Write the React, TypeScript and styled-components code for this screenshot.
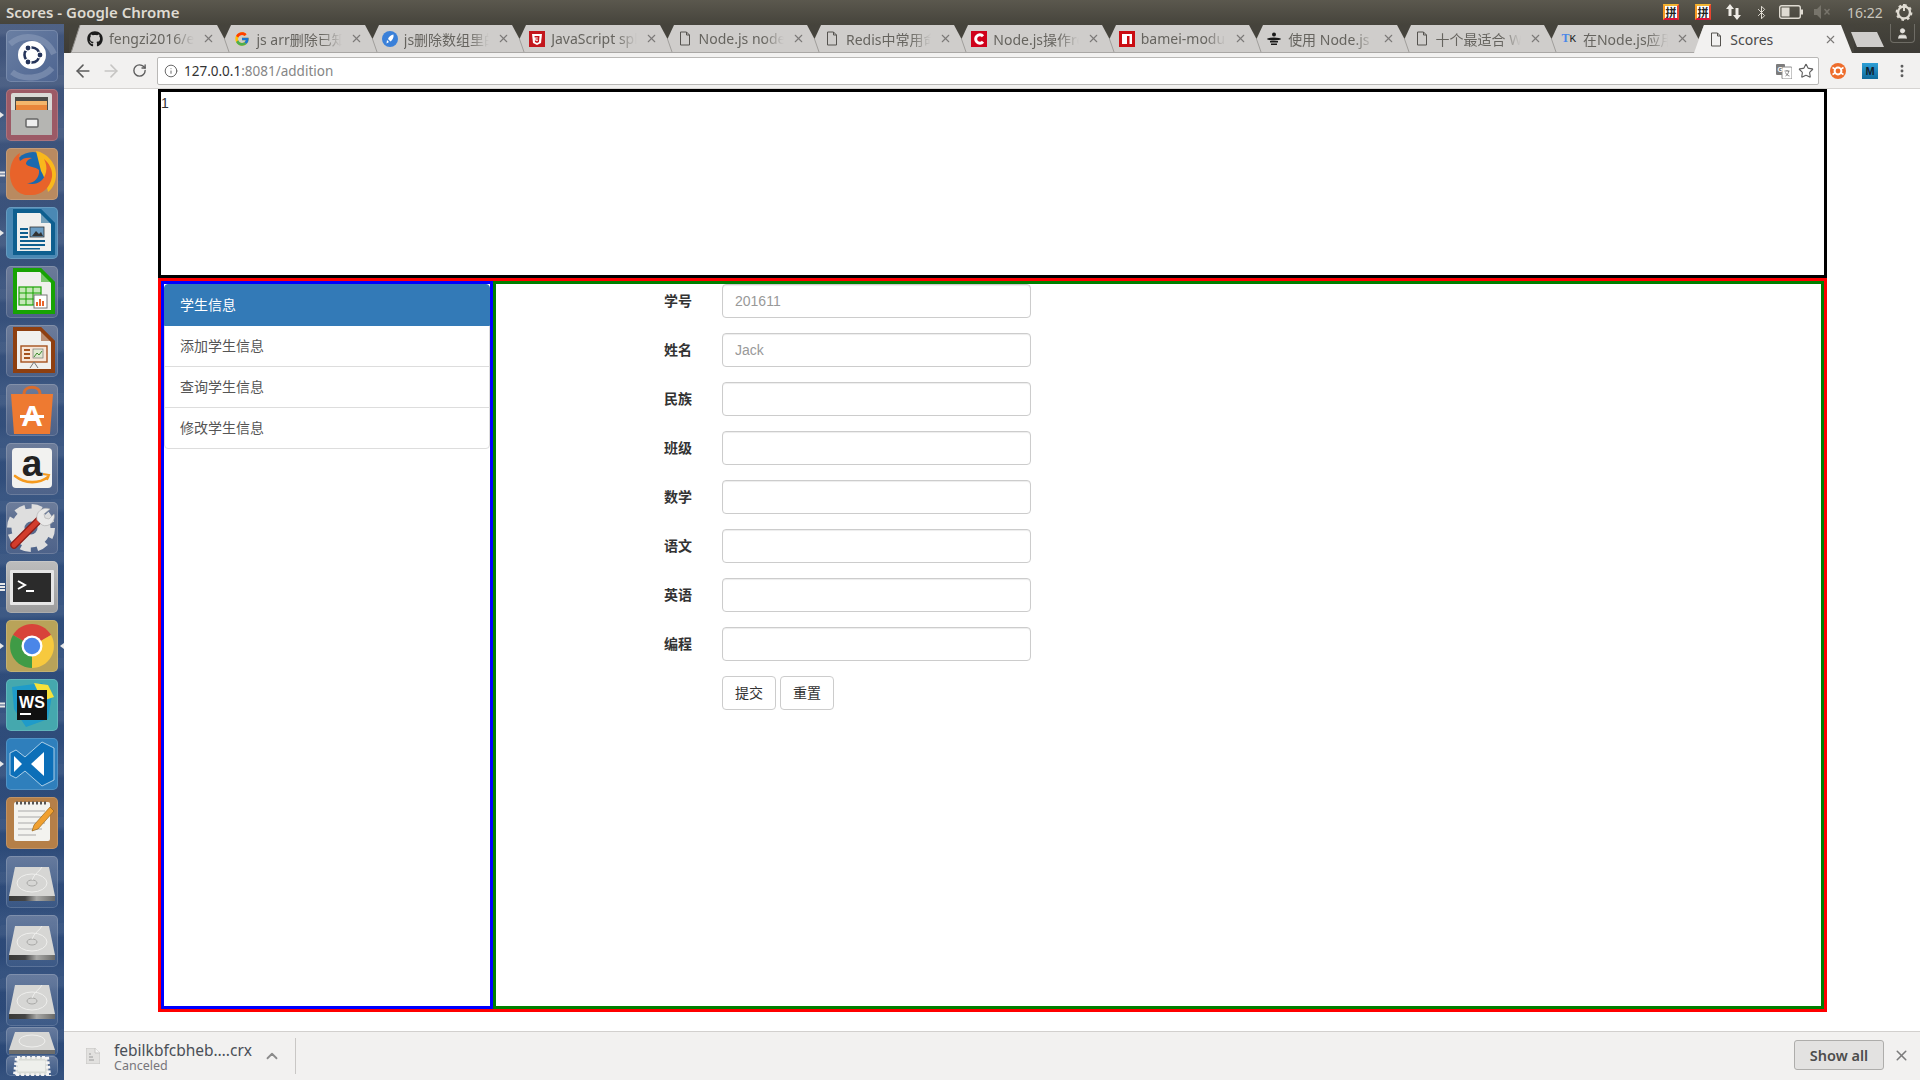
import { Fragment } from "react";
import type { ReactNode } from "react";
import styled, { createGlobalStyle } from "styled-components";
import { ArrowLeft, ArrowRight, Bluetooth, ChevronUp, EllipsisVertical, Info, RotateCw, Star, User, X } from "lucide-react";
import { FaGithub } from "react-icons/fa";
import { FcGoogle } from "react-icons/fc";

const UI_FONT = `"Noto Sans", "Noto Sans CJK SC", sans-serif`;
const PAGE_FONT = `"Liberation Sans", "Noto Sans CJK SC", sans-serif`;

const GlobalStyle = createGlobalStyle`
  html, body {
    margin: 0;
    padding: 0;
    height: 100%;
    overflow: hidden;
    background: #fff;
    font-family: ${PAGE_FONT};
  }
  * {
    box-sizing: border-box;
  }
`;

const Desktop = styled.div`
  width: 1920px;
  height: 1080px;
  display: flex;
  flex-direction: column;
  overflow: hidden;
`;

/* ---- ubuntu top panel ---- */

const TopPanel = styled.header`
  height: 24px;
  flex: none;
  display: flex;
  align-items: center;
  justify-content: space-between;
  padding: 0 5px 0 6px;
  background: linear-gradient(#5b584e, #46443c);
`;

const WindowTitle = styled.span`
  font: 600 15px ${UI_FONT};
  color: #dfdbd2;
`;

const Tray = styled.div`
  display: flex;
  align-items: center;
  height: 100%;
`;

const TraySlot = styled.div<{ $w: number }>`
  width: ${({ $w }) => $w}px;
  height: 100%;
  display: flex;
  align-items: center;
  justify-content: center;
  color: #dfdbd2;
`;

const PinyinBadge = styled.span`
  width: 16px;
  height: 16px;
  display: flex;
  align-items: center;
  justify-content: center;
  font: 700 11px "Noto Sans CJK SC", sans-serif;
  color: #222;
  background: #fff;
  border: 2px solid;
  border-color: #f2b632 #e9452e #d9143c #f59a23;
`;

const Clock = styled.span`
  font: 400 14px ${UI_FONT};
  color: #c9c5bb;
`;

const ArrowsIcon = () => (
  <svg width="18" height="18" viewBox="0 0 18 18" fill="#efece6">
    <path d="M5 1l4 5H6.5v7h-3V6H1z" />
    <path d="M12 17l-4-5h2.5V5h3v7H16z" />
  </svg>
);

const BatteryIcon = () => (
  <svg width="24" height="14" viewBox="0 0 24 14">
    <rect x="0.7" y="0.7" width="20.6" height="12.6" rx="2" fill="none" stroke="#dfdbd2" strokeWidth="1.4" />
    <rect x="2.5" y="2.5" width="8" height="9" fill="#dfdbd2" />
    <rect x="22" y="4.5" width="2" height="5" fill="#dfdbd2" />
  </svg>
);

const VolumeIcon = () => (
  <svg width="18" height="14" viewBox="0 0 18 14" fill="#77746b">
    <path d="M0 4h3l4-4v14l-4-4H0z" />
    <path d="M10 4.5l1-1 2 2 2-2 1 1-2 2.5 2 2-1 1-2-2-2 2-1-1 2-2z" />
  </svg>
);

const SessionIcon = () => (
  <svg width="18" height="18" viewBox="0 0 18 18" fill="none" stroke="#dfdbd2">
    <circle cx="9" cy="9.5" r="6" strokeWidth="2.4" />
    <circle cx="9" cy="9.5" r="7.4" strokeWidth="2" strokeDasharray="2.6 3.2" />
    <path d="M9 1v7" strokeWidth="2" />
  </svg>
);

/* ---- launcher ---- */

const Workspace = styled.div`
  flex: 1;
  min-height: 0;
  display: flex;
`;

const Launcher = styled.nav`
  width: 64px;
  flex: none;
  display: flex;
  flex-direction: column;
  gap: 7px;
  padding: 6px 0 0 6px;
  overflow: hidden;
  background:
    repeating-linear-gradient(178deg, rgba(170, 178, 190, 0.1) 0 9px, rgba(20, 40, 80, 0.08) 14px 31px, rgba(170, 178, 190, 0.06) 46px 53px),
    linear-gradient(#45597f, #33517f 45%, #2e4c7b);
`;

const Tile = styled.div<{ $bg: string; $h?: number; $pull?: number }>`
  position: relative;
  width: 52px;
  height: ${({ $h }) => $h ?? 52}px;
  margin-top: ${({ $pull }) => $pull ?? 0}px;
  flex: none;
  border-radius: 5px;
  background: ${({ $bg }) => $bg};
  box-shadow: inset 0 0 0 1px rgba(255, 255, 255, 0.16);

  svg {
    display: block;
    width: 100%;
    height: 100%;
  }
`;

const Pip = styled.span<{ $side: "left" | "right" }>`
  position: absolute;
  top: 50%;
  ${({ $side }) => ($side === "left" ? "left: -6px" : "right: -6px")};
  margin-top: -3px;
  width: 0;
  height: 0;
  border-top: 3px solid transparent;
  border-bottom: 3px solid transparent;
  ${({ $side }) => ($side === "left" ? "border-left: 4px solid #e8e8e8" : "border-right: 4px solid #e8e8e8")};
`;

const PipDashes = styled.span`
  position: absolute;
  top: 50%;
  left: -6px;
  transform: translateY(-50%);
  display: flex;
  flex-direction: column;
  gap: 1px;

  i {
    display: block;
    width: 5px;
    height: 2px;
    background: #e8e8e8;
  }
`;

const Dashes = ({ count }: { count: number }) => (
  <PipDashes>
    {Array.from({ length: count }, (_, i) => (
      <i key={i} />
    ))}
  </PipDashes>
);

const UbuntuGlyph = () => (
  <svg viewBox="0 0 52 52">
    <path d="M4 14C18 2 40 6 48 24M6 42c10 8 30 8 40-4" fill="none" stroke="#8a9bb9" strokeWidth="6" opacity="0.6" />
    <circle cx="26" cy="25" r="14" fill="#fff" />
    <circle cx="26" cy="25" r="7.5" fill="none" stroke="#25345a" strokeWidth="2.6" />
    <g fill="#25345a" stroke="#fff" strokeWidth="1.2">
      <circle cx="34" cy="25" r="3" />
      <circle cx="22" cy="18" r="3" />
      <circle cx="22" cy="32" r="3" />
    </g>
  </svg>
);

const FilesGlyph = () => (
  <svg viewBox="0 0 52 52">
    <rect x="5" y="4" width="41" height="42" rx="2" fill="#d9d9d6" />
    <rect x="9" y="8" width="33" height="15" fill="#4a4a48" />
    <rect x="10" y="12" width="31" height="5" fill="#f3b56b" />
    <rect x="10" y="16" width="31" height="6" fill="#e8853a" />
    <rect x="5" y="21" width="41" height="25" fill="#b5b5b2" />
    <rect x="20" y="30" width="12" height="8" rx="1" fill="#eee" stroke="#666" strokeWidth="1.5" />
  </svg>
);

const FirefoxGlyph = () => (
  <svg viewBox="0 0 52 52">
    <circle cx="27" cy="24" r="20" fill="#1b69ae" />
    <path d="M30 3c11 2 20 12 20 23 0 8-3 14-8 18-2-9-3-14-7-21z" fill="#f9b81c" />
    <path d="M4 26C4 16 8 8 14 5c-1 3-1 6 0 8 3-3 7-4 12-3-3 1-6 3-6 6 3 4 9 2 13 6 1 7-5 14-12 13 8 3 17-1 19-11 1-5 0-9-2-13 5 4 9 11 8 18-2 12-12 19-22 18C12 48 4 38 4 26z" fill="#e8632a" />
  </svg>
);

const OfficeGlyph = ({ accent, children }: { accent: string; children: ReactNode }) => (
  <svg viewBox="0 0 52 52">
    <path d="M7 2h28l14 14v32H7z" fill={accent} />
    <path d="M11 6h23l11 11v27H11z" fill="#f0f0ee" />
    <path d="M35 2l14 14H35z" fill={accent} opacity="0.55" />
    {children}
  </svg>
);

const WriterGlyph = () => (
  <OfficeGlyph accent="#0f5f8f">
    <g fill="#0f5f8f">
      <rect x="14" y="21" width="8" height="2" />
      <rect x="14" y="25" width="8" height="2" />
      <rect x="14" y="29" width="8" height="2" />
      <rect x="14" y="33" width="25" height="2" />
      <rect x="14" y="37" width="25" height="2" />
      <rect x="14" y="41" width="20" height="1.5" />
    </g>
    <rect x="24" y="20" width="14" height="10" fill="#6d9ec4" stroke="#333" strokeWidth="0.8" />
    <path d="M26 29l4-5 3 3 2-2 2 4z" fill="#333" />
  </OfficeGlyph>
);

const CalcGlyph = () => (
  <OfficeGlyph accent="#18a303">
    <rect x="13" y="21" width="22" height="18" fill="#c5e8b8" stroke="#18a303" strokeWidth="1.2" />
    <path d="M13 27h22M13 33h22M20 21v18M27 21v18" stroke="#18a303" strokeWidth="1" />
    <rect x="28" y="29" width="13" height="13" fill="#fff" stroke="#777" />
    <path d="M31 40v-4M34 40v-7M37 40v-5" strokeWidth="2" stroke="#e8632a" />
  </OfficeGlyph>
);

const ImpressGlyph = () => (
  <OfficeGlyph accent="#8e3f10">
    <rect x="15" y="21" width="26" height="16" fill="#f7e6d8" stroke="#a5521e" strokeWidth="1.4" />
    <path d="M18 25h6M18 29h6M18 33h6" stroke="#a5521e" strokeWidth="2" />
    <rect x="27" y="24" width="10" height="9" fill="#dfe8d0" stroke="#777" strokeWidth="0.7" />
    <path d="M28 32l3-4 2 2 3-4" stroke="#3c8a2e" strokeWidth="1" fill="none" />
    <path d="M28 37l-4 6M28 37l4 6" stroke="#777" strokeWidth="1" fill="none" />
  </OfficeGlyph>
);

const StoreGlyph = () => (
  <svg viewBox="0 0 52 52">
    <path d="M18 10c0-9 16-9 16 0" fill="none" stroke="#d96c2d" strokeWidth="3" />
    <path d="M5 10h42l-3 40H8z" fill="#ee7a31" />
    <text x="26" y="42" fontFamily="Liberation Sans" fontWeight="700" fontSize="30" fill="#fff" textAnchor="middle">
      A
    </text>
    <rect x="14" y="31" width="24" height="3" fill="#fff" />
  </svg>
);

const AmazonGlyph = () => (
  <svg viewBox="0 0 52 52">
    <rect x="6" y="5" width="40" height="40" rx="4" fill="#f2f2f0" />
    <text x="26" y="33" fontFamily="Liberation Sans" fontWeight="700" fontSize="37" fill="#222" textAnchor="middle">
      a
    </text>
    <path d="M9 33c10 8 24 8 33 1" fill="none" stroke="#f49a1f" strokeWidth="2.6" strokeLinecap="round" />
    <path d="M37 31l6 1-2 5" fill="none" stroke="#f49a1f" strokeWidth="2" />
  </svg>
);

const SettingsGlyph = () => (
  <svg viewBox="0 0 52 52">
    <circle cx="25" cy="26" r="13" fill="none" stroke="#dedede" strokeWidth="13" />
    <circle cx="25" cy="26" r="21" fill="none" stroke="#dedede" strokeWidth="6" strokeDasharray="10 6.490" />
    <path d="M8 43l26-26" stroke="#8f1d17" strokeWidth="7.500" strokeLinecap="round" />
    <path d="M8 43l26-26" stroke="#d23c2c" strokeWidth="5" strokeLinecap="round" />
    <path d="M31 18c-2-8 6-14 13-11l-6 5 1 4 4 1 5-5c2 7-5 14-12 11z" fill="#e8e8e8" stroke="#aaa" strokeWidth="0.6" />
  </svg>
);

const TerminalGlyph = () => (
  <svg viewBox="0 0 52 52">
    <rect x="4" y="9" width="44" height="35" rx="1" fill="#e6e6e6" />
    <rect x="7" y="12" width="38" height="29" fill="#2b2b2b" />
    <path d="M12 20l7 4-7 4" fill="none" stroke="#fff" strokeWidth="2" />
    <rect x="20" y="29" width="8" height="2" fill="#fff" />
  </svg>
);

const ChromeGlyph = () => (
  <svg viewBox="0 0 52 52">
    <path d="M26 26L7 15A22 22 0 0 1 45 15Z" fill="#d8433a" />
    <path d="M26 26L45 15A22 22 0 0 1 26 48Z" fill="#f7c93e" />
    <path d="M26 26L26 48A22 22 0 0 1 7 15Z" fill="#3f9b46" />
    <circle cx="26" cy="26" r="10.5" fill="#fff" />
    <circle cx="26" cy="26" r="8.2" fill="#4a86e8" />
  </svg>
);

const WebStormGlyph = () => (
  <svg viewBox="0 0 52 52">
    <path d="M6 8l30-4 10 12-4 24-22 8L8 30z" fill="#1f9bc9" />
    <path d="M28 4l14 2 6 12-12 4z" fill="#f6e23a" />
    <rect x="11" y="11" width="30" height="30" fill="#111" />
    <text x="26" y="29" fontFamily="Liberation Sans" fontWeight="700" fontSize="16" fill="#fff" textAnchor="middle">
      WS
    </text>
    <rect x="14" y="34" width="11" height="2" fill="#fff" />
  </svg>
);

const VSCodeGlyph = () => (
  <svg viewBox="0 0 52 52">
    <path d="M36 4l12 6v32l-12 6-17-15-9 7-6-3V15l6-3 9 7z" fill="#0c6fb8" stroke="#cfe4f3" strokeWidth="0.8" />
    <path d="M8 18l8 8-8 8z" fill="#fff" />
    <path d="M38 14v24L25 26z" fill="#fff" />
  </svg>
);

const EditorGlyph = () => (
  <svg viewBox="0 0 52 52">
    <rect x="8" y="5" width="36" height="39" rx="2" fill="#f3f3ef" />
    <path d="M10 6h32" stroke="#555" strokeWidth="3" strokeDasharray="2 2" />
    <path d="M12 14h27M12 20h27M12 26h27M12 32h24M12 38h18" stroke="#aaa" strokeWidth="1.2" />
    <path d="M44 10l4 4-16 18-6 2 2-6z" fill="#f0a030" stroke="#8a5a10" strokeWidth="0.6" />
  </svg>
);

const DriveGlyph = () => (
  <svg viewBox="0 0 52 52">
    <defs>
      <linearGradient id="driveEdge" x1="0" x2="1" y1="0" y2="0">
        <stop offset="0" stopColor="#3a3a38" />
        <stop offset="0.35" stopColor="#444" />
        <stop offset="0.6" stopColor="#a8a8a6" />
        <stop offset="1" stopColor="#6a6a68" />
      </linearGradient>
    </defs>
    <path d="M9 11h34l6 29H3z" fill="#d6d6d4" />
    <ellipse cx="26" cy="27" rx="15" ry="9" fill="none" stroke="#efefed" strokeWidth="1" />
    <ellipse cx="26" cy="27" rx="5" ry="3" fill="none" stroke="#a8a8a6" strokeWidth="1" />
    <path d="M26 24c2-6 8-9 10-13" fill="none" stroke="#efefed" strokeWidth="1" />
    <rect x="3" y="40" width="46" height="5" fill="url(#driveEdge)" />
  </svg>
);

const SquashedDriveGlyph = () => (
  <svg viewBox="0 0 52 29" preserveAspectRatio="none">
    <path d="M9 5h34l6 18H3z" fill="#d6d6d4" />
    <ellipse cx="26" cy="14" rx="13" ry="6" fill="none" stroke="#efefed" />
    <rect x="3" y="23" width="46" height="4" fill="#6d6d6b" />
  </svg>
);

const TrashGlyph = () => (
  <svg viewBox="0 0 52 22" preserveAspectRatio="none">
    <path d="M11 1h30l2 20H9z" fill="#d9dcd7" stroke="#f4f4f4" strokeWidth="4" strokeDasharray="3 2" />
    <rect x="12" y="5" width="27" height="12" fill="#eef0ec" />
  </svg>
);

const TILE_SLATE = "linear-gradient(rgba(120, 133, 160, 0.8), rgba(85, 103, 140, 0.7))";
const TILE_DRIVE = "linear-gradient(rgba(115, 133, 165, 0.8), rgba(65, 95, 140, 0.55))";

const LauncherBar = () => (
  <Launcher>
    <Tile $bg="linear-gradient(135deg, #6a7fa3, #4e6591)">
      <UbuntuGlyph />
    </Tile>
    <Tile $bg="#9c5a66">
      <FilesGlyph />
      <Pip $side="left" />
    </Tile>
    <Tile $bg="#b98a60">
      <FirefoxGlyph />
      <Dashes count={2} />
    </Tile>
    <Tile $bg="#4a88b4">
      <WriterGlyph />
      <Pip $side="left" />
    </Tile>
    <Tile $bg={TILE_SLATE}>
      <CalcGlyph />
    </Tile>
    <Tile $bg={TILE_SLATE}>
      <ImpressGlyph />
    </Tile>
    <Tile $bg={TILE_SLATE}>
      <StoreGlyph />
    </Tile>
    <Tile $bg={TILE_SLATE}>
      <AmazonGlyph />
    </Tile>
    <Tile $bg={TILE_SLATE}>
      <SettingsGlyph />
    </Tile>
    <Tile $bg="linear-gradient(#bdbdbd, #9c9c9c)">
      <TerminalGlyph />
      <Dashes count={3} />
    </Tile>
    <Tile $bg="#b9a359">
      <ChromeGlyph />
      <Pip $side="left" />
      <Pip $side="right" />
    </Tile>
    <Tile $bg="#45a8ae">
      <WebStormGlyph />
      <Dashes count={2} />
    </Tile>
    <Tile $bg="#2f7fbc">
      <VSCodeGlyph />
      <Pip $side="left" />
    </Tile>
    <Tile $bg="#b57f48">
      <EditorGlyph />
    </Tile>
    <Tile $bg={TILE_DRIVE}>
      <DriveGlyph />
    </Tile>
    <Tile $bg={TILE_DRIVE}>
      <DriveGlyph />
    </Tile>
    <Tile $bg={TILE_DRIVE}>
      <DriveGlyph />
    </Tile>
    <Tile $bg={TILE_DRIVE} $h={29} $pull={-6}>
      <SquashedDriveGlyph />
    </Tile>
    <Tile $bg={TILE_DRIVE} $h={20} $pull={-7}>
      <TrashGlyph />
    </Tile>
  </Launcher>
);

/* ---- chrome: tabs ---- */

const Browser = styled.div`
  flex: 1;
  min-width: 0;
  display: flex;
  flex-direction: column;
`;

const TabStrip = styled.div`
  position: relative;
  height: 29px;
  flex: none;
  display: flex;
  padding: 1px 0 0 5px;
  background: linear-gradient(#46443c, #3d3b36);
`;

const TabBody = styled.div<{ $active?: boolean }>`
  width: 131.4px;
  height: 28px;
  flex: none;
  display: flex;
  align-items: center;
  gap: 6px;
  background: ${({ $active }) => ($active ? "#f2f1f0" : "#cfcdcb")};
  border-bottom: ${({ $active }) => ($active ? "none" : "1px solid #a9a7a5")};
  color: ${({ $active }) => ($active ? "#4a4a4a" : "#66645f")};
`;

const TabTitle = styled.span<{ $fade: boolean }>`
  flex: 1;
  min-width: 0;
  overflow: hidden;
  white-space: nowrap;
  font: 400 14px ${UI_FONT};
  ${({ $fade }) =>
    $fade &&
    `-webkit-mask-image: linear-gradient(to right, #000 76%, transparent 100%);
     mask-image: linear-gradient(to right, #000 76%, transparent 100%);`}
`;

const TabClose = styled(X)`
  flex: none;
  margin: 0 1px 0 2px;
  color: #7b7977;
`;

const FaviconBox = styled.span`
  width: 16px;
  height: 16px;
  margin-left: 2px;
  flex: none;
  display: flex;
  align-items: center;
  justify-content: center;
  font-size: 16px;
  color: #1c1c1c;
`;

const EdgeSvg = styled.svg`
  display: block;
  flex: none;
`;

type EdgeKind = "start" | "between" | "beforeActive" | "end";

const DARK = "#45433c";
const TAB_GREY = "#cfcdcb";
const TAB_ACTIVE = "#f2f1f0";
const TAB_LINE = "#a9a7a5";

const TabEdge = ({ kind }: { kind: EdgeKind }) => (
  <EdgeSvg width="16" height="28" viewBox="0 0 16 28">
    {kind === "start" && (
      <>
        <rect width="16" height="28" fill={TAB_GREY} />
        <path d="M0 0H11L2 28H0Z" fill={DARK} />
        <path d="M11 0L2 28" stroke="#8f8d8a" strokeWidth="1" />
        <rect y="27" x="2" width="14" height="1" fill={TAB_LINE} />
      </>
    )}
    {kind === "between" && (
      <>
        <rect width="16" height="28" fill={TAB_GREY} />
        <path d="M1 0H15L8.5 14Z" fill={DARK} />
        <path d="M8.5 14L13 27" stroke="#a09e9b" strokeWidth="1" />
        <rect y="27" width="16" height="1" fill={TAB_LINE} />
      </>
    )}
    {kind === "beforeActive" && (
      <>
        <rect width="16" height="28" fill={TAB_GREY} />
        <rect y="27" width="16" height="1" fill={TAB_LINE} />
        <path d="M1 0H14L8.5 14Z" fill={DARK} />
        <path d="M14 0H16V28H4Z" fill={TAB_ACTIVE} />
      </>
    )}
    {kind === "end" && (
      <>
        <rect width="16" height="28" fill={DARK} />
        <path d="M0 0H3L14 28H0Z" fill={TAB_ACTIVE} />
      </>
    )}
  </EdgeSvg>
);

const NewTabSvg = styled.svg`
  display: block;
  flex: none;
  margin: 7px 0 0 -3px;
`;

const ProfileButton = styled.div`
  position: absolute;
  top: 0;
  right: 5px;
  width: 25px;
  height: 19px;
  display: flex;
  align-items: center;
  justify-content: center;
  border: 1px solid #6e6c65;
  border-top: none;
  border-radius: 0 0 4px 4px;
  color: #e4e2dd;
`;

const DocIcon = () => (
  <svg width="12" height="15" viewBox="0 0 12 15" fill="none" stroke="#55534f" strokeWidth="1">
    <path d="M1.5 1h6l3 3v10h-9zM7.5 1v3h3" />
  </svg>
);

const RocketIcon = () => (
  <svg width="16" height="16" viewBox="0 0 16 16">
    <circle cx="8" cy="8" r="8" fill="#3a80d9" />
    <path d="M11.5 3.5c.5 3-1 5.500-3 7L6 8c1-2.500 3-4.200 5.500-4.500zM5 9l2 2-2.500 1.500z" fill="#fff" />
  </svg>
);

const ShieldIcon = () => (
  <svg width="16" height="16" viewBox="0 0 16 16">
    <rect width="16" height="16" fill="#c3161c" />
    <path d="M3 3h10l-1 9-4 2-4-2z" fill="#fff" />
    <path d="M5.500 5h5l-.5 6-2 1-2-1-.2-1.500h1.500V10l.7.3.7-.3.1-1.500H6.500V7.500h2.300v-1H5.700z" fill="#c3161c" />
  </svg>
);

const CIcon = () => (
  <svg width="16" height="16" viewBox="0 0 16 16">
    <rect width="16" height="16" fill="#d0021b" />
    <path d="M12 5.200A4.200 4.200 0 1 0 12 10.800" fill="none" stroke="#fff" strokeWidth="3" />
  </svg>
);

const NpmIcon = () => (
  <svg width="16" height="16" viewBox="0 0 16 16">
    <rect width="16" height="16" fill="#cb0d12" />
    <rect x="3" y="3" width="10" height="10" fill="#fff" />
    <rect x="8" y="5" width="2.500" height="8" fill="#cb0d12" />
  </svg>
);

const BeeIcon = () => (
  <svg width="16" height="16" viewBox="0 0 16 16" fill="#1a1a1a">
    <circle cx="8" cy="3.500" r="2" />
    <ellipse cx="8" cy="8" rx="7" ry="1.500" />
    <rect x="4" y="10" width="8" height="1.500" />
    <rect x="5" y="12.500" width="6" height="1.500" />
  </svg>
);

const TkBlue = styled.b`
  color: #4a86e8;
  font: 700 12px "Liberation Serif", serif;
`;

const TkDark = styled.span`
  color: #222;
  font: 400 11px "Liberation Mono", monospace;
`;

const tabs: { icon: ReactNode; title: string }[] = [
  { icon: <FaGithub />, title: "fengzi2016/express" },
  { icon: <FcGoogle />, title: "js arr删除已知元素" },
  { icon: <RocketIcon />, title: "js删除数组里的元素" },
  { icon: <ShieldIcon />, title: "JavaScript splice" },
  { icon: <DocIcon />, title: "Node.js node-redis" },
  { icon: <DocIcon />, title: "Redis中常用命令" },
  { icon: <CIcon />, title: "Node.js操作redis" },
  { icon: <NpmIcon />, title: "bamei-module" },
  { icon: <BeeIcon />, title: "使用 Node.js 开发" },
  { icon: <DocIcon />, title: "十个最适合 Web" },
  {
    icon: (
      <>
        <TkBlue>T</TkBlue>
        <TkDark>K</TkDark>
      </>
    ),
    title: "在Node.js应用中",
  },
];

const Tabs = () => (
  <TabStrip>
    {tabs.map((tab, i) => (
      <Fragment key={tab.title}>
        <TabEdge kind={i === 0 ? "start" : "between"} />
        <TabBody>
          <FaviconBox>{tab.icon}</FaviconBox>
          <TabTitle $fade>{tab.title}</TabTitle>
          <TabClose size={13} strokeWidth={2} />
        </TabBody>
      </Fragment>
    ))}
    <TabEdge kind="beforeActive" />
    <TabBody $active>
      <FaviconBox>
        <DocIcon />
      </FaviconBox>
      <TabTitle $fade={false}>Scores</TabTitle>
      <TabClose size={13} strokeWidth={2} />
    </TabBody>
    <TabEdge kind="end" />
    <NewTabSvg width="33" height="15" viewBox="0 0 33 15">
      <path d="M0 0H26L33 15H6Z" fill={TAB_GREY} />
    </NewTabSvg>
    <ProfileButton>
      <User size={13} fill="currentColor" strokeWidth={1.5} />
    </ProfileButton>
  </TabStrip>
);

/* ---- chrome: toolbar ---- */

const Toolbar = styled.div`
  height: 36px;
  flex: none;
  display: flex;
  align-items: center;
  padding: 0 2px 0 5px;
  background: #f2f1f0;
  border-bottom: 1px solid #d6d4d2;
`;

const NavButton = styled.span<{ $w?: number; $muted?: boolean }>`
  width: ${({ $w }) => $w ?? 28}px;
  height: 28px;
  flex: none;
  display: flex;
  align-items: center;
  justify-content: center;
  color: ${({ $muted }) => ($muted ? "#c6c5c3" : "#5c5c5c")};
`;

const Omnibox = styled.div`
  flex: 1;
  height: 28px;
  margin: 0 3px 0 4px;
  display: flex;
  align-items: center;
  gap: 6px;
  padding: 0 4px 0 6px;
  background: #fff;
  border: 1px solid #b9b8b6;
  border-radius: 2px;
  color: #5f5f5f;
`;

const Url = styled.span`
  flex: 1;
  font: 400 13.5px ${UI_FONT};
  color: #858585;

  b {
    font-weight: 400;
    color: #333;
  }
`;

const TranslateIcon = () => (
  <svg width="16" height="16" viewBox="0 0 16 16">
    <rect x="0" y="1" width="9" height="11" rx="1" fill="#7c7c7c" />
    <rect x="6" y="4" width="10" height="12" rx="1" fill="#fff" stroke="#8a8a8a" />
    <text x="1.5" y="9" fontFamily="Liberation Sans" fontWeight="700" fontSize="7" fill="#fff">
      G
    </text>
    <path d="M8.500 8h5M11 7v1M9.500 13c2-1 3-3 3.200-5M9.500 9.500c1 2 2 3 4 3.500" stroke="#666" fill="none" strokeWidth="0.8" />
  </svg>
);

const OrangeExt = () => (
  <svg width="16" height="16" viewBox="0 0 16 16">
    <circle cx="8" cy="8" r="8" fill="#ee6d2c" />
    <circle cx="8" cy="8" r="3.400" fill="none" stroke="#fff" strokeWidth="2" />
    <path d="M2.500 4.500l2.500 1.500M13.500 4.500l-2.500 1.500M2.500 11.500l2.500-1.500M13.500 11.500l-2.500-1.500" stroke="#fff" strokeWidth="1.500" />
  </svg>
);

const MeterBadge = styled.span`
  width: 16px;
  height: 16px;
  display: flex;
  align-items: center;
  justify-content: center;
  font: 700 11px "Liberation Sans", sans-serif;
  color: #10222f;
  background: linear-gradient(#2d9fd6, #0f6a9b);
`;

const BrowserToolbar = () => (
  <Toolbar>
    <NavButton>
      <ArrowLeft size={20} strokeWidth={1.9} />
    </NavButton>
    <NavButton $muted>
      <ArrowRight size={20} strokeWidth={1.9} />
    </NavButton>
    <NavButton>
      <RotateCw size={15} strokeWidth={2.2} />
    </NavButton>
    <Omnibox>
      <Info size={14} strokeWidth={1.6} />
      <Url>
        <b>127.0.0.1</b>:8081/addition
      </Url>
      <TranslateIcon />
      <Star size={16} strokeWidth={1.7} />
    </Omnibox>
    <NavButton $w={32}>
      <OrangeExt />
    </NavButton>
    <NavButton $w={32}>
      <MeterBadge>M</MeterBadge>
    </NavButton>
    <NavButton $w={32}>
      <EllipsisVertical size={16} strokeWidth={2.4} />
    </NavButton>
  </Toolbar>
);

/* ---- the page itself ---- */

const Page = styled.main`
  flex: 1;
  min-height: 0;
  padding-left: 94px;
  background: #fff;
`;

const Header = styled.div`
  width: 1669px;
  height: 189px;
  padding-top: 1px;
  border: 3px solid #000;
  font-size: 14px;
  line-height: 20px;
  color: #333;
`;

const Main = styled.div`
  width: 1669px;
  height: 734px;
  display: flex;
  border: 3px solid #f00;
`;

const Sidebar = styled.aside`
  width: 332px;
  flex: none;
  border: 3px solid #00f;
`;

const ListGroup = styled.ul`
  margin: 0;
  padding: 0;
  list-style: none;
`;

const ListItem = styled.li<{ $active?: boolean }>`
  height: 42px;
  margin-bottom: -1px;
  padding: 10px 15px;
  font-size: 14px;
  line-height: 20px;
  border: 1px solid ${({ $active }) => ($active ? "#337ab7" : "#ddd")};
  background: ${({ $active }) => ($active ? "#337ab7" : "#fff")};
  color: ${({ $active }) => ($active ? "#fff" : "#555")};
  position: ${({ $active }) => ($active ? "relative" : "static")};

  &:first-child {
    border-radius: 4px 4px 0 0;
  }
  &:last-child {
    margin-bottom: 0;
    border-radius: 0 0 4px 4px;
  }
`;

const Content = styled.section`
  flex: 1;
  min-width: 0;
  border: 3px solid #008000;
`;

const Form = styled.form`
  display: grid;
  grid-template-columns: 196px 309px;
  column-gap: 30px;
  row-gap: 15px;
  align-items: center;
`;

const Label = styled.label`
  justify-self: end;
  padding-bottom: 2px;
  font-size: 14px;
  font-weight: 700;
  color: #333;
`;

const Input = styled.input`
  width: 100%;
  height: 34px;
  padding: 6px 12px;
  font: 14px/20px ${PAGE_FONT};
  color: #555;
  background: #fff;
  border: 1px solid #ccc;
  border-radius: 4px;
  box-shadow: inset 0 1px 1px rgba(0, 0, 0, 0.075);

  &::placeholder {
    color: #999;
    opacity: 1;
  }
`;

const ButtonRow = styled.div`
  grid-column: 2;
  display: flex;
  gap: 4px;
`;

const Button = styled.button`
  width: 54px;
  height: 34px;
  padding: 6px 12px;
  font: 14px/20px ${PAGE_FONT};
  color: #333;
  background: #fff;
  border: 1px solid #ccc;
  border-radius: 4px;
`;

const fields = [
  { label: "学号", placeholder: "201611" },
  { label: "姓名", placeholder: "Jack" },
  { label: "民族" },
  { label: "班级" },
  { label: "数学" },
  { label: "语文" },
  { label: "英语" },
  { label: "编程" },
];

const menu = ["学生信息", "添加学生信息", "查询学生信息", "修改学生信息"];

/* ---- download shelf ---- */

const DownloadBar = styled.footer`
  height: 49px;
  flex: none;
  display: flex;
  align-items: center;
  padding: 0 10px 0 22px;
  background: #f2f1f0;
  border-top: 1px solid #d2d0ce;
`;

const FileName = styled.div`
  margin: 2px 0 0 14px;
  width: 144px;
  white-space: nowrap;
  color: #4a4f57;
  font: 400 15.5px/18px ${UI_FONT};

  small {
    display: block;
    font-size: 12.5px;
    line-height: 14px;
    color: #77757a;
  }
`;

const Chevron = styled(ChevronUp)`
  margin-left: 5px;
  color: #8b8b8b;
`;

const Divider = styled.span`
  width: 1px;
  height: 36px;
  margin-left: 14px;
  background: #c9c7c5;
`;

const ShowAll = styled.button`
  width: 90px;
  height: 30px;
  margin: 0 0 2px auto;
  font: 600 14.5px ${UI_FONT};
  color: #4d4d4d;
  background: #e3e2e1;
  border: 1px solid #aeadab;
  border-radius: 3px;
`;

const ShelfClose = styled(X)`
  margin: 0 0 2px 9px;
  color: #7b7b7b;
`;

const FileIcon = () => (
  <svg width="14" height="16" viewBox="0 0 14 16">
    <path d="M0 0h9l5 5v11H0z" fill="#e2e1df" stroke="#c6c5c3" />
    <path d="M9 0v5h5" fill="#f6f6f5" stroke="#c6c5c3" />
    <path d="M3 6h2M3 9h4M3 12h5" stroke="#9a9a9a" />
  </svg>
);

const Row = ({ label, placeholder }: { label: string; placeholder?: string }) => (
  <>
    <Label>{label}</Label>
    <Input placeholder={placeholder} />
  </>
);

export default function App() {
  return (
    <>
      <GlobalStyle />
      <Desktop>
        <TopPanel>
          <WindowTitle>Scores - Google Chrome</WindowTitle>
          <Tray>
            <TraySlot $w={32}>
              <PinyinBadge>拼</PinyinBadge>
            </TraySlot>
            <TraySlot $w={32}>
              <PinyinBadge>拼</PinyinBadge>
            </TraySlot>
            <TraySlot $w={30}>
              <ArrowsIcon />
            </TraySlot>
            <TraySlot $w={24}>
              <Bluetooth size={15} strokeWidth={1.6} />
            </TraySlot>
            <TraySlot $w={36}>
              <BatteryIcon />
            </TraySlot>
            <TraySlot $w={28}>
              <VolumeIcon />
            </TraySlot>
            <TraySlot $w={56}>
              <Clock>16:22</Clock>
            </TraySlot>
            <TraySlot $w={22}>
              <SessionIcon />
            </TraySlot>
          </Tray>
        </TopPanel>
        <Workspace>
          <LauncherBar />
          <Browser>
            <Tabs />
            <BrowserToolbar />
            <Page>
              <Header>1</Header>
              <Main>
                <Sidebar>
                  <ListGroup>
                    {menu.map((item, i) => (
                      <ListItem key={item} $active={i === 0}>
                        {item}
                      </ListItem>
                    ))}
                  </ListGroup>
                </Sidebar>
                <Content>
                  <Form>
                    {fields.map((field) => (
                      <Row key={field.label} {...field} />
                    ))}
                    <ButtonRow>
                      <Button type="button">提交</Button>
                      <Button type="button">重置</Button>
                    </ButtonRow>
                  </Form>
                </Content>
              </Main>
            </Page>
            <DownloadBar>
              <FileIcon />
              <FileName>
                febilkbfcbheb….crx
                <small>Canceled</small>
              </FileName>
              <Chevron size={18} strokeWidth={2.4} />
              <Divider />
              <ShowAll type="button">Show all</ShowAll>
              <ShelfClose size={17} strokeWidth={2.2} />
            </DownloadBar>
          </Browser>
        </Workspace>
      </Desktop>
    </>
  );
}
